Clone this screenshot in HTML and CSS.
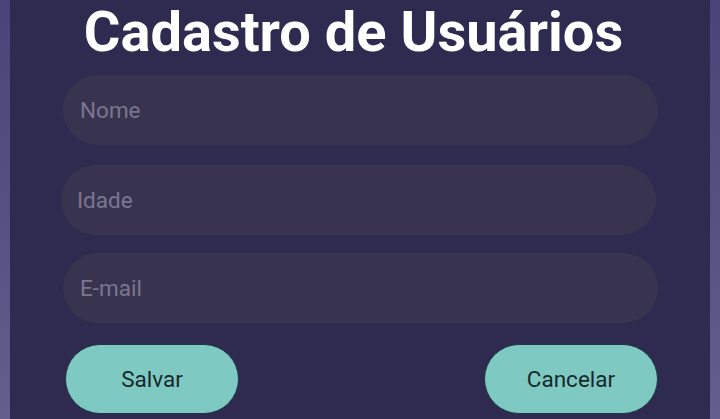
FILE: index.html
```html
<!DOCTYPE html>
<html lang="pt-BR">
<head>
<meta charset="utf-8">
<title>Cadastro de Usuários</title>
<link rel="stylesheet" href="styles.css">
</head>
<body>
<div class="screen">
  <div class="side"></div>
  <main class="panel">
    <h1 class="title">Cadastro de Usuários</h1>
    <form class="form">
      <input class="field" type="text" placeholder="Nome">
      <input class="field field-shift" type="text" placeholder="Idade">
      <input class="field field-tight" type="email" placeholder="E-mail">
      <div class="actions">
        <button type="button" class="btn">Salvar</button>
        <button type="button" class="btn">Cancelar</button>
      </div>
    </form>
  </main>
  <div class="side"></div>
</div>
</body>
</html>
```
FILE: styles.css
```css
* { box-sizing: border-box; }
html, body { margin: 0; padding: 0; }
body {
  width: 720px;
  height: 419px;
  overflow: hidden;
  font-family: Roboto, "Noto Sans", sans-serif;
  background: #2f2a4f;
}
.screen {
  display: flex;
  height: 419px;
}
.side {
  width: 10px;
  flex: none;
  background: linear-gradient(#4a4377, #635e8e);
}
.panel {
  flex: 1;
  background: #2f2a4f;
  display: flex;
  flex-direction: column;
  padding: 0 52px 0 53px;
}
.title {
  margin: 0;
  height: 64px;
  line-height: 64px;
  padding-right: 14px;
  text-align: center;
  font-size: 56px;
  font-weight: 700;
  color: #ffffff;
  white-space: nowrap;
}
.form {
  display: flex;
  flex-direction: column;
  margin-top: 11px;
}
.field {
  height: 70px;
  border: none;
  outline: none;
  border-radius: 35px;
  background: #38344f;
  padding: 0 17px;
  font-family: Roboto, sans-serif;
  font-size: 22.5px;
  color: #ddd;
  margin-bottom: 20px;
}
.field-shift { margin-left: -2px; margin-right: 2px; padding-left: 16px; }
.field-tight { margin-top: -2px; margin-bottom: 21px; }
.field::placeholder { color: #7a7692; }
.actions {
  display: flex;
  justify-content: space-between;
  padding: 0 0 0 2px;
}
.btn {
  width: 174px;
  height: 70px;
  border-radius: 35px;
  border: 1px solid #1d3a44;
  background: #7ecac3;
  font-family: Roboto, sans-serif;
  font-size: 22.5px;
  color: #17282b;
  cursor: pointer;
}
```
